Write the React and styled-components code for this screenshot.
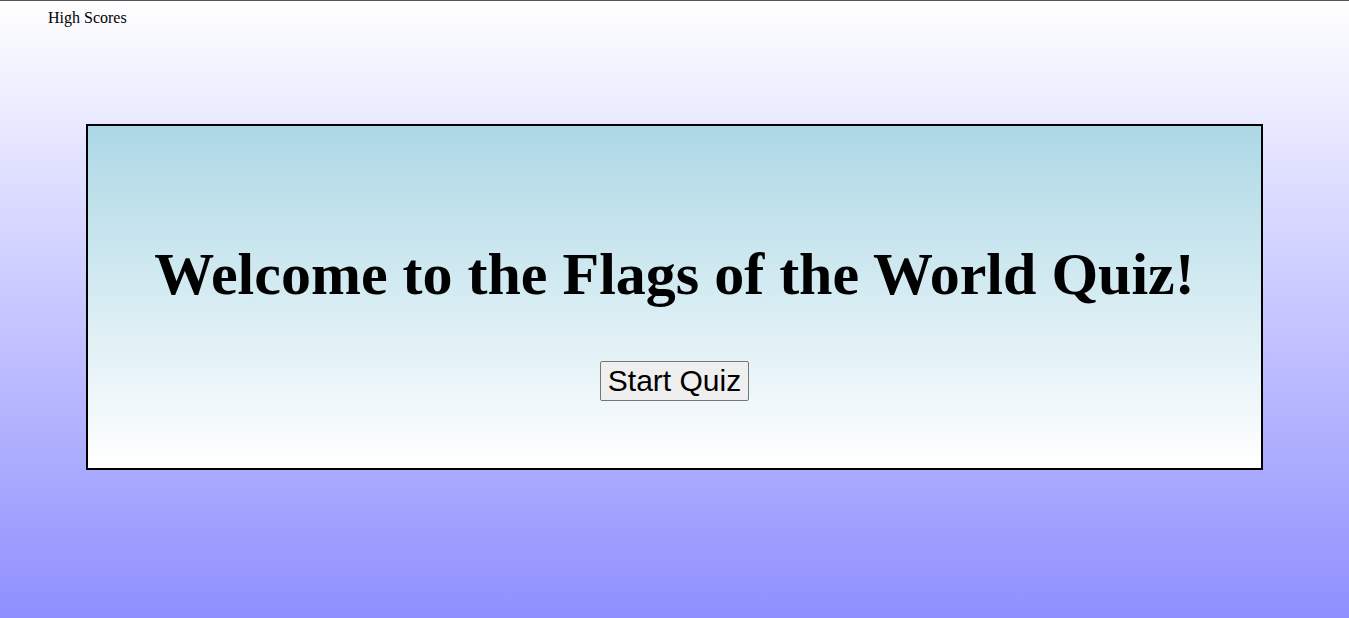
import React from "react";
import styled, { createGlobalStyle } from "styled-components";

const GlobalStyle = createGlobalStyle`
  html, body {
    margin: 0;
    padding: 0;
  }
  body {
    min-height: 618px;
    font-family: "Liberation Serif", "Times New Roman", serif;
    background: linear-gradient(#ffffff, #8f8fff);
    background-attachment: fixed;
  }
`;

const Page = styled.div`
  min-height: 618px;
  border-top: 1px solid #555;
  box-sizing: border-box;
  display: flex;
  flex-direction: column;
`;

const Nav = styled.nav`
  padding: 8px 48px 0;
  height: 123px;
  box-sizing: border-box;
`;

const NavLink = styled.a`
  font-size: 16px;
  color: black;
  text-decoration: none;
  cursor: pointer;
`;

const Card = styled.section`
  margin: 0 86px;
  height: 346px;
  box-sizing: border-box;
  border: 2px solid black;
  background: linear-gradient(#add8e6, #ffffff);
  display: flex;
  flex-direction: column;
  align-items: center;
  padding-top: 112px;
`;

const Title = styled.h1`
  margin: 0;
  font-size: 60px;
  font-weight: bold;
  line-height: 73px;
  text-align: center;
`;

const StartButton = styled.button`
  margin-top: 50px;
  font-family: "Liberation Sans", Arial, sans-serif;
  font-size: 30px;
  padding: 1px 7px;
  height: 40px;
  background: #efefef;
  border: 1px solid #767676;
  border-radius: 2px;
  color: black;
  cursor: pointer;
`;

export default function App() {
  return (
    <>
      <GlobalStyle />
      <Page>
        <Nav>
          <NavLink>High Scores</NavLink>
        </Nav>
        <Card>
          <Title>Welcome to the Flags of the World Quiz!</Title>
          <StartButton>Start Quiz</StartButton>
        </Card>
      </Page>
    </>
  );
}
